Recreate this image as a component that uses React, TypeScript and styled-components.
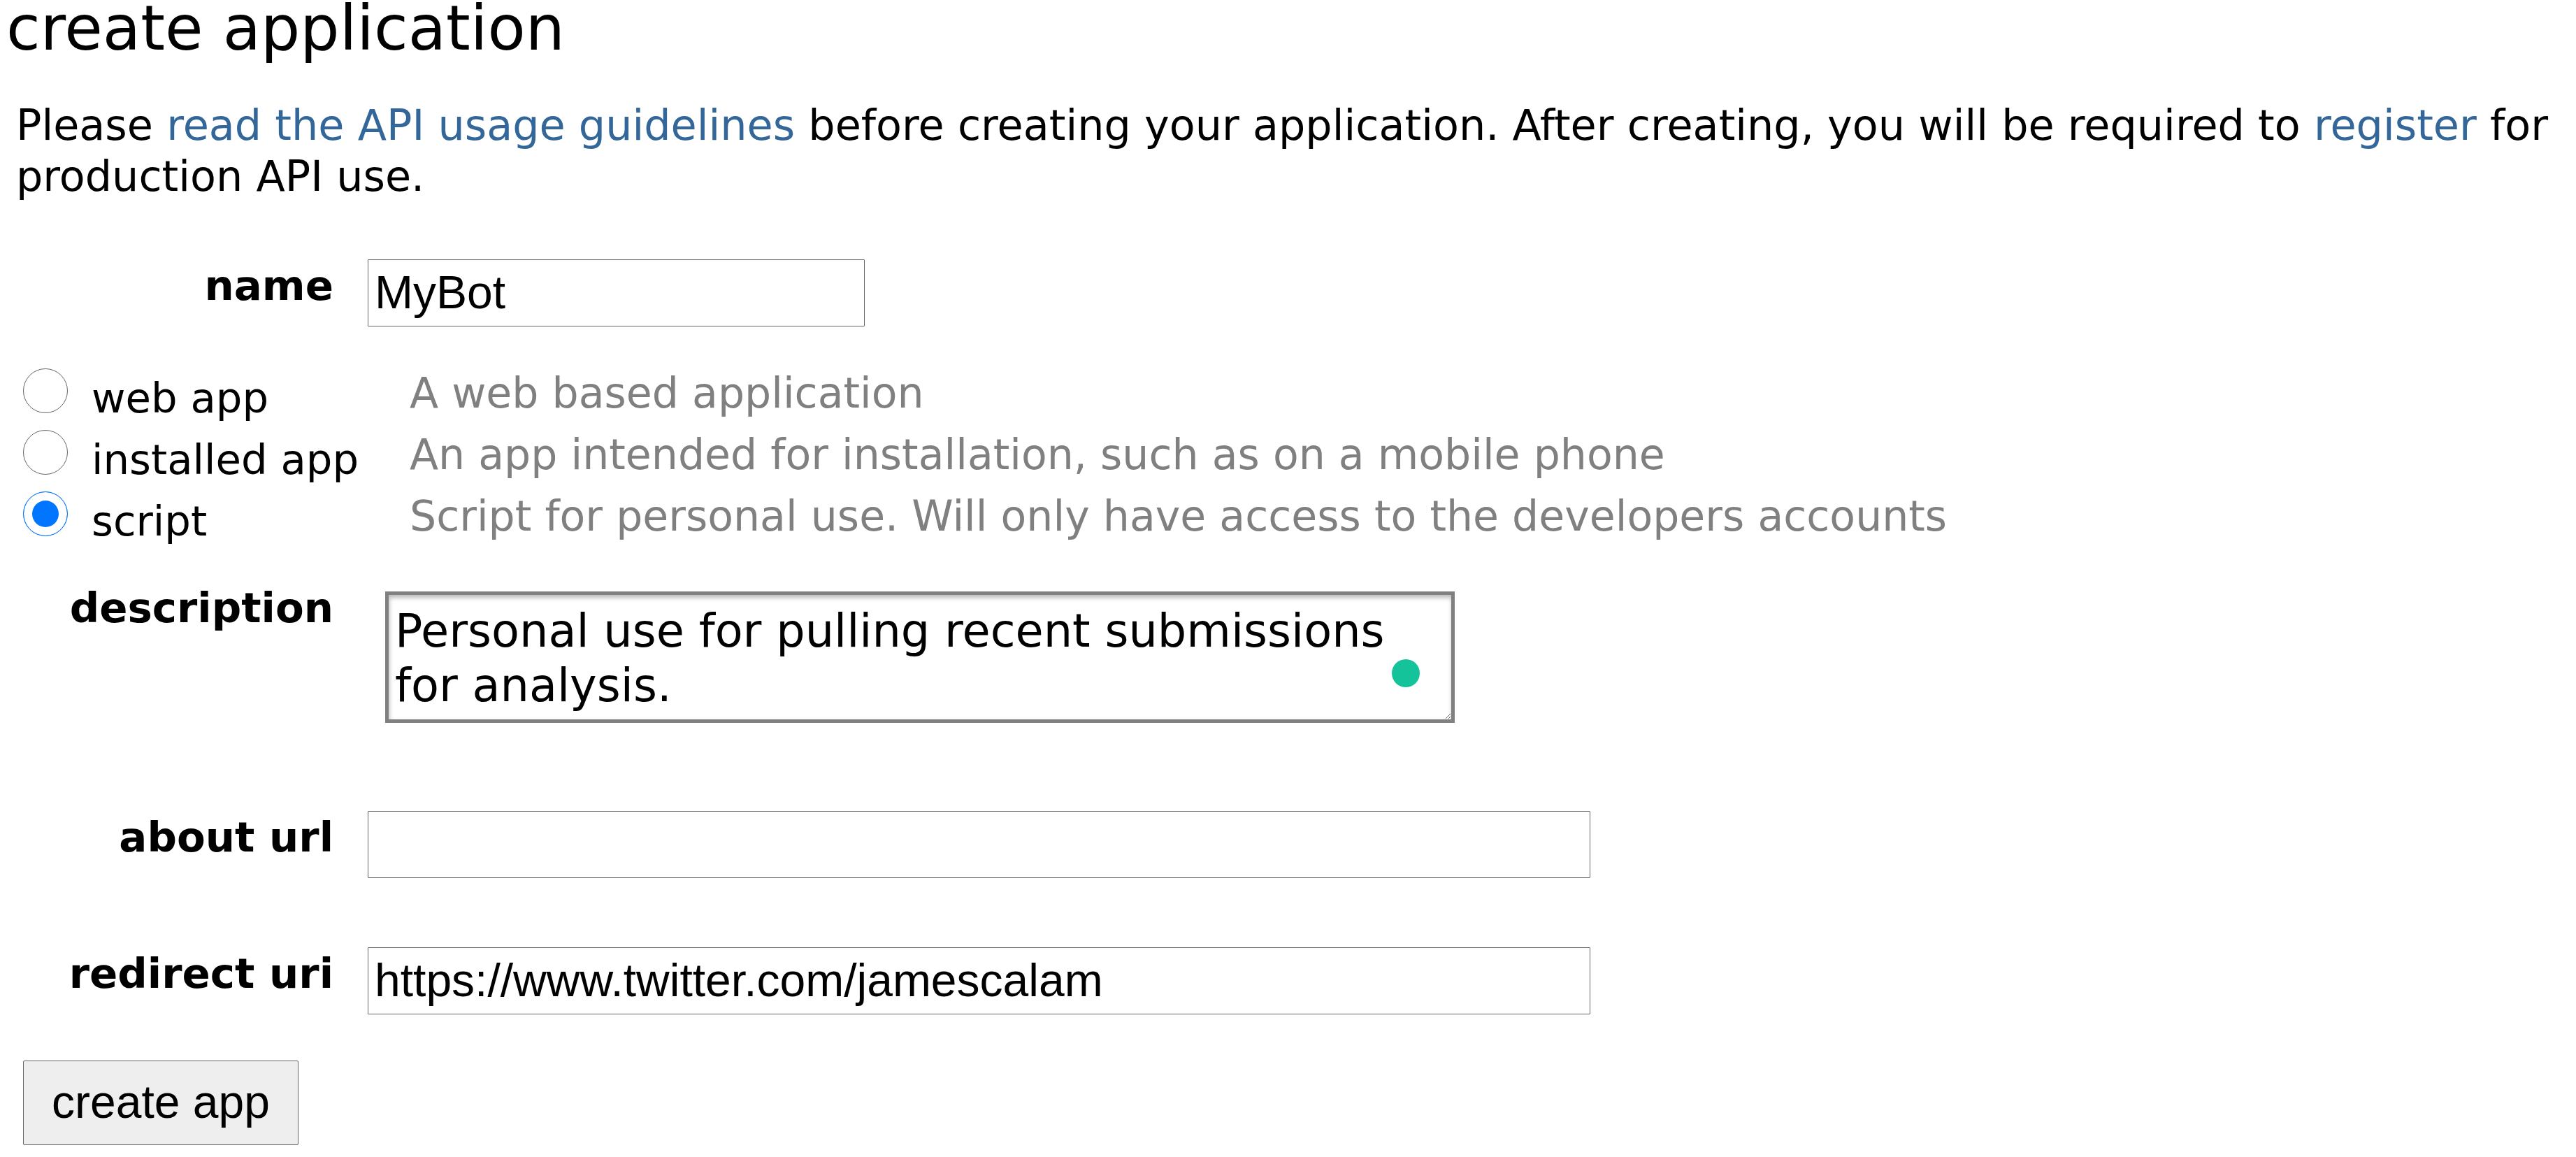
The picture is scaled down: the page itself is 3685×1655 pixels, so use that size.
import React from 'react';
import styled, { createGlobalStyle } from 'styled-components';

const GlobalStyle = createGlobalStyle`
    html, body {
        margin: 0;
        padding: 0;
        background: #fff;
    }
    body {
        font-family: 'DejaVu Sans', Verdana, sans-serif;
        color: #000;
    }
`;

const Page = styled.div`
    width: 3685px;
    height: 1655px;
    overflow: hidden;
`;

const Title = styled.h1`
    margin: 0;
    padding: 0 0 0 9px;
    font-size: 88.7px;
    font-weight: 400;
    line-height: 81px;
`;

const Intro = styled.p`
    margin: 62px 0 0;
    padding: 0 10px 0 23px;
    font-size: 60.4px;
    line-height: 73px;
`;

const IntroLink = styled.a`
    color: #369;
    text-decoration: none;
`;

const Form = styled.form`
    margin: 82px 0 0;
`;

const Row = styled.div<{ $top?: number }>`
    display: grid;
    grid-template-columns: 477px auto;
    column-gap: 49px;
    align-items: start;
    justify-content: start;
    margin-top: ${(p) => p.$top ?? 0}px;
`;

const Label = styled.label<{ $lh?: number }>`
    font-size: 59.4px;
    font-weight: 700;
    text-align: right;
    line-height: ${(p) => p.$lh ?? 76}px;
`;

const TextInput = styled.input<{ $w: number }>`
    box-sizing: border-box;
    display: block;
    width: ${(p) => p.$w}px;
    height: 96px;
    margin: 0;
    padding: 0 9px 2px;
    border: 1px solid #666;
    border-radius: 1px;
    background: #fff;
    outline: none;
    font-family: 'Liberation Sans', Arial, sans-serif;
    font-size: 66px;
    color: #000;
`;

const KindList = styled.div`
    margin-top: 60px;
    padding-left: 33px;
`;

const KindRow = styled.div`
    display: grid;
    grid-template-columns: 64px 489px auto;
    height: 88px;
`;

const Radio = styled.input`
    appearance: none;
    box-sizing: border-box;
    display: block;
    width: 64px;
    height: 64px;
    margin: 0;
    border: 1px solid #666;
    border-radius: 50%;
    background: #fff;

    &:checked {
        border-color: #0075ff;
        background: #0075ff;
        box-shadow: inset 0 0 0 12px #fff;
    }
`;

const KindName = styled.label`
    padding: 8px 0 0 34px;
    font-size: 59.3px;
    line-height: 70px;
`;

const KindHint = styled.span`
    font-size: 60.1px;
    line-height: 70px;
    color: #808080;
    white-space: nowrap;
`;

const TextAreaWrap = styled.div`
    position: relative;
    width: 1530px;
    height: 188px;
    margin-left: 25px;
`;

const TextArea = styled.textarea`
    box-sizing: border-box;
    display: block;
    width: 100%;
    height: 100%;
    margin: 0;
    padding: 12px 90px 12px 9px;
    border: 5px solid #808080;
    border-radius: 0;
    outline: none;
    box-shadow: inset 1px 4px 6px rgba(0, 0, 0, 0.28);
    font-family: 'DejaVu Sans', Verdana, sans-serif;
    font-size: 65.3px;
    line-height: 78px;
    color: #000;
    overflow: hidden;
`;

const StatusDot = styled.span`
    position: absolute;
    top: 97px;
    left: 1440px;
    width: 40px;
    height: 40px;
    border-radius: 50%;
    background: #14c39a;
`;

const SubmitButton = styled.button`
    display: block;
    box-sizing: border-box;
    width: 394px;
    height: 121px;
    margin: 66px 0 0 33px;
    padding: 0 0 3px;
    border: 1px solid #666;
    border-radius: 2px;
    background: #eee;
    font-family: 'Liberation Sans', Arial, sans-serif;
    font-size: 66px;
    color: #000;
`;

const kinds = [
    { id: 'web', name: 'web app', hint: 'A web based application' },
    { id: 'installed', name: 'installed app', hint: 'An app intended for installation, such as on a mobile phone' },
    { id: 'script', name: 'script', hint: 'Script for personal use. Will only have access to the developers accounts' },
];

export default function App() {
    return (
        <Page>
            <GlobalStyle />
            <Title>create application</Title>
            <Intro>
                Please <IntroLink href="#">read the API usage guidelines</IntroLink> before creating your application. After creating, you will be required to{' '}
                <IntroLink href="#">register</IntroLink> for production API use.
            </Intro>
            <Form onSubmit={(e) => e.preventDefault()}>
                <Row>
                    <Label htmlFor="name">name</Label>
                    <TextInput id="name" $w={711} defaultValue="MyBot" />
                </Row>
                <KindList>
                    {kinds.map((kind) => (
                        <KindRow key={kind.id}>
                            <Radio type="radio" name="kind" id={kind.id} defaultChecked={kind.id === 'script'} />
                            <KindName htmlFor={kind.id}>{kind.name}</KindName>
                            <KindHint>{kind.hint}</KindHint>
                        </KindRow>
                    ))}
                </KindList>
                <Row $top={55}>
                    <Label htmlFor="description" $lh={48}>description</Label>
                    <TextAreaWrap>
                        <TextArea id="description" defaultValue="Personal use for pulling recent submissions for analysis." />
                        <StatusDot />
                    </TextAreaWrap>
                </Row>
                <Row $top={126}>
                    <Label htmlFor="about">about url</Label>
                    <TextInput id="about" $w={1749} />
                </Row>
                <Row $top={99}>
                    <Label htmlFor="redirect">redirect uri</Label>
                    <TextInput id="redirect" $w={1749} defaultValue="https://www.twitter.com/jamescalam" />
                </Row>
                <SubmitButton type="submit">create app</SubmitButton>
            </Form>
        </Page>
    );
}
